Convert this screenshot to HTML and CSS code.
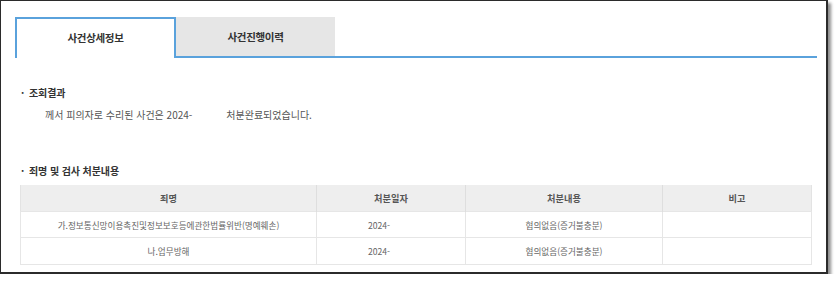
FILE: index.html
```html
<!DOCTYPE html>
<html lang="ko">
<head>
    <meta charset="UTF-8">
    <title>사건조회</title>
    <link rel="stylesheet" href="styles.css">
</head>
<body>
    <div class="frame">
        <div class="tabs">
            <div class="tab active">사건상세정보</div>
            <div class="tab">사건진행이력</div>
        </div>
        <div class="content">
            <div class="sec-title"><span class="dot">·</span>조회결과</div>
            <p class="result">께서 피의자로 수리된 사건은 2024-<span class="blank"></span>처분완료되었습니다.</p>

            <div class="sec-title second"><span class="dot">·</span>죄명 및 검사 처분내용</div>
            <table class="grid">
                <colgroup>
                    <col class="c-name">
                    <col class="c-date">
                    <col class="c-result">
                    <col class="c-note">
                </colgroup>
                <thead>
                    <tr>
                        <th>죄명</th>
                        <th>처분일자</th>
                        <th>처분내용</th>
                        <th>비고</th>
                    </tr>
                </thead>
                <tbody>
                    <tr>
                        <td>가.정보통신망이용촉진및정보보호등에관한법률위반(명예훼손)</td>
                        <td>2024-<span class="blank short"></span></td>
                        <td>혐의없음(증거불충분)</td>
                        <td></td>
                    </tr>
                    <tr class="last">
                        <td>나.업무방해</td>
                        <td>2024-<span class="blank short"></span></td>
                        <td>혐의없음(증거불충분)</td>
                        <td></td>
                    </tr>
                </tbody>
            </table>
        </div>
    </div>
</body>
</html>
```

FILE: styles.css
```css
body { margin: 0; background: #fff; font-family: "Noto Sans CJK KR", "Noto Sans", sans-serif; }
.frame { width: 828px; height: 274px; box-sizing: border-box; border: 1px solid #2b2b2b; border-right-width: 2px; border-bottom-width: 2px; box-shadow: 3px 3px 3px rgba(0,0,0,0.45); padding: 16px 9px 0 14px; background: #fff; }

.tabs { display: flex; align-items: flex-start; border-bottom: 2px solid #5aa2dc; }
.tab { width: 159px; height: 39px; line-height: 39px; text-align: center; background: #e6e6e6; color: #333; font-size: 10.5px; font-weight: bold; letter-spacing: -0.3px; }
.tab.active { width: 161px; height: 41px; line-height: 37px; margin-bottom: -2px; box-sizing: border-box; border: 2px solid #5aa2dc; border-bottom: none; background: #fff; }

.content { padding: 0 5px; }
.sec-title { margin-top: 28px; line-height: 14px; font-size: 10px; font-weight: bold; color: #333; letter-spacing: -0.1px; }
.sec-title.second { margin-top: 42px; }
.dot { display: inline-block; width: 9px; padding-left: 1px; box-sizing: border-box; }
.result { margin: 8px 0 0; padding-left: 25px; line-height: 14px; font-size: 10px; color: #555; }
.blank { display: inline-block; width: 34px; }
.blank.short { width: 24px; }

.grid { width: 100%; margin-top: 7px; border-collapse: collapse; table-layout: fixed; border: 1px solid #e3e3e3; border-top: none; }
.c-name { width: 296px; }
.c-date { width: 149px; }
.c-result { width: 197px; }
.grid th { height: 26px; padding: 0; background: #eeeeee; color: #555; font-size: 9.2px; font-weight: 600; border-left: 1px solid #dedede; }
.grid th:first-child { border-left: none; }
.grid td { height: 25px; padding: 0; text-align: center; font-size: 8.6px; color: #666; border: 1px solid #e6e6e6; }
.grid tr.last td { height: 26px; }
```
